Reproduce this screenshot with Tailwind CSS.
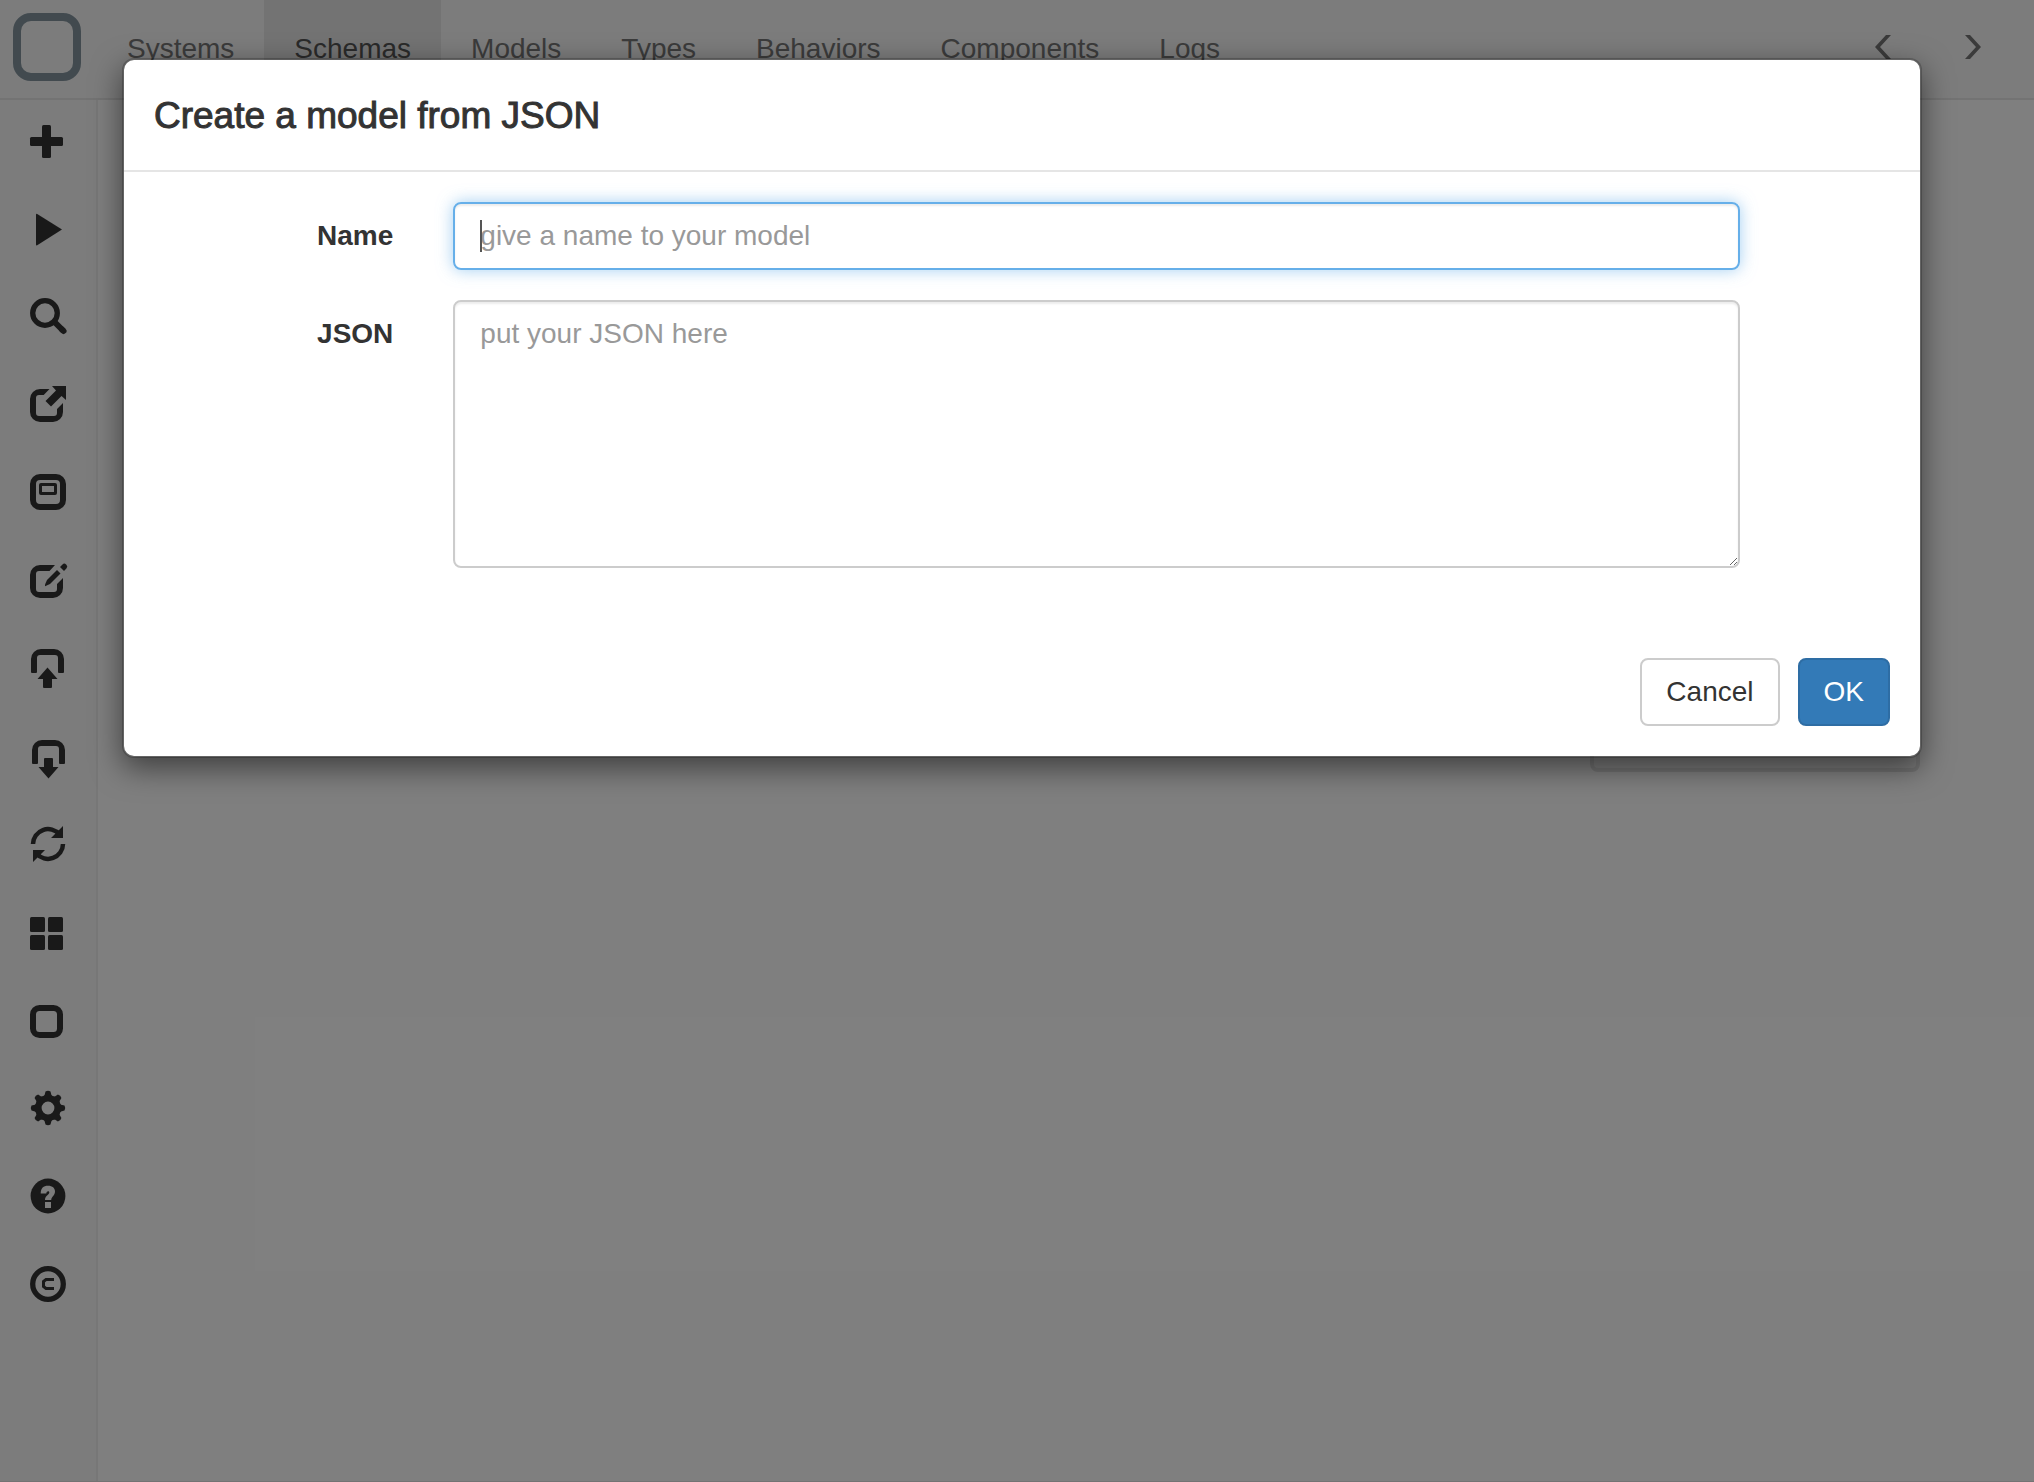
<!DOCTYPE html>
<html lang="en">
<head>
<meta charset="utf-8">
<title>Schemas</title>
<script src="https://cdn.jsdelivr.net/npm/@tailwindcss/browser@4"></script>
</head>
<body class="bg-white font-['Helvetica_Neue','Liberation_Sans',Arial,sans-serif] text-[28px] leading-10 text-[#333]">
<div class="relative flex min-h-screen flex-col border-b border-[#e7e7e7]">

  <header class="flex h-[100px] items-stretch justify-between border-b-2 border-[#e7e7e7] bg-[#f8f8f8]">
    <div class="flex">
      <a href="#" aria-label="Home" class="w-[97px] shrink-0">
        <svg class="h-24 w-24" viewBox="0 0 96 96" fill="none" stroke="#84959f" stroke-width="8"><rect x="17" y="17" width="60" height="60" rx="14"/></svg>
      </a>
      <nav class="flex text-[#777]">
        <a href="#" class="px-[30px] pt-[29px]">Systems</a>
        <a href="#" class="bg-[#e7e7e7] px-[30px] pt-[29px] text-[#555]">Schemas</a>
        <a href="#" class="px-[30px] pt-[29px]">Models</a>
        <a href="#" class="px-[30px] pt-[29px]">Types</a>
        <a href="#" class="px-[30px] pt-[29px]">Behaviors</a>
        <a href="#" class="px-[30px] pt-[29px]">Components</a>
        <a href="#" class="px-[30px] pt-[29px]">Logs</a>
      </nav>
    </div>
    <div class="flex pr-[26px]">
      <button type="button" aria-label="Back" class="w-[90px]"><svg class="h-24 w-[90px]" viewBox="0 0 90 96" fill="#777"><path d="M47 46 58 34H63L52 46 63 58H58z"/></svg></button>
      <button type="button" aria-label="Forward" class="w-[90px]"><svg class="h-24 w-[90px]" viewBox="0 0 90 96" fill="#777"><path d="M63 46 52 34H47L58 46 47 58H52z"/></svg></button>
    </div>
  </header>

  <div class="flex flex-1">
    <aside class="flex w-[98px] flex-col border-r-2 border-[#efefef] bg-[#f8f8f8]">
      <button type="button" aria-label="Add"><svg class="block h-22 w-24" viewBox="0 0 96 88" fill="#333"><rect x="42" y="25" width="9" height="33" rx="1.5"/><rect x="30" y="37" width="33" height="9" rx="1.5"/></svg></button>
      <button type="button" aria-label="Run"><svg class="block h-22 w-24" viewBox="0 0 96 88" fill="#333"><path d="M36 26.5q0-1.200 1.200-.6L62 41.500 37.200 57.200q-1.200.6-1.200-.6z"/></svg></button>
      <button type="button" aria-label="Search"><svg class="block h-22 w-24" viewBox="0 0 96 88" fill="none" stroke="#333"><circle cx="45" cy="37" r="12.3" stroke-width="5.300"/><path d="M54.500 46 63.500 55" stroke-width="6"/><path d="M62 53.500 63.500 55" stroke-width="6" stroke-linecap="round"/></svg></button>
      <button type="button" aria-label="Open"><svg class="block h-22 w-24" viewBox="0 0 96 88" fill="#333"><path d="M49.500 25H40a10 10 0 0 0-10 10v13a10 10 0 0 0 10 10h13a10 10 0 0 0 10-10V39l-6 6v4a3 3 0 0 1-3 3H39a3 3 0 0 1-3-3V34a3 3 0 0 1 3-3h4.700z"/><path d="M52 22H66V36L61.500 32 51 42.500 45.500 37 56 26.500z"/></svg></button>
      <button type="button" aria-label="Models"><svg class="block h-22 w-24" viewBox="0 0 96 88" fill="none" stroke="#333"><rect x="33" y="25" width="30" height="30" rx="7" stroke-width="6"/><rect x="40.500" y="32.500" width="15" height="9" rx=".5" stroke-width="3"/></svg></button>
      <button type="button" aria-label="Edit"><svg class="block h-22 w-24" viewBox="0 0 96 88" fill="#333"><path d="M55 25H40a10 10 0 0 0-10 10v13a10 10 0 0 0 10 10h13a10 10 0 0 0 10-10V38l-6 6v5a3 3 0 0 1-3 3H39a3 3 0 0 1-3-3V34a3 3 0 0 1 3-3h10.500z"/><path d="M57 30 60.500 33.500 50 44 45 46.200V44.500L47 40z"/><path d="M60 27 62.500 24.500q1.800-1.800 3.600 0l.3.300q1.800 1.800 0 3.600L64 31z"/></svg></button>
      <button type="button" aria-label="Upload"><svg class="block h-22 w-24" viewBox="0 0 96 88" fill="#333"><path d="M31 44V31a10 10 0 0 1 10-10h13a10 10 0 0 1 10 10v13q0 1-1 1h-4q-1 0-1-1V30a3 3 0 0 0-3-3H40a3 3 0 0 0-3 3v14q0 1-1 1h-4q-1 0-1-1z"/><path d="M47.500 39.500 57.500 51H52v8q0 1-1 1h-7q-1 0-1-1v-8h-5.500z"/></svg></button>
      <button type="button" aria-label="Download"><svg class="block h-22 w-24" viewBox="0 0 96 88" fill="#333"><path d="M32 47V34a10 10 0 0 1 10-10h13a10 10 0 0 1 10 10v13q0 1-1 1h-4q-1 0-1-1V33a3 3 0 0 0-3-3H41a3 3 0 0 0-3 3v14q0 1-1 1h-4q-1 0-1-1z"/><path d="M48.500 62.500 38.500 51H44v-8q0-1 1-1h7q1 0 1 1v8h5.500z"/></svg></button>
      <button type="button" aria-label="Refresh"><svg class="block h-22 w-24" viewBox="0 0 96 88" fill="#333"><path d="M33 40A15 15 0 0 1 59.500 30.500M63 40A15 15 0 0 1 36.500 49.500" fill="none" stroke="#333" stroke-width="4.500"/><path d="M63 22V34H51L54.500 30.500 58.500 26.500zM33 58V46H45L41.500 49.500 37.500 53.500z"/></svg></button>
      <button type="button" aria-label="Grid"><svg class="block h-22 w-24" viewBox="0 0 96 88" fill="#333"><rect x="30" y="25" width="15" height="15" rx="1.500"/><rect x="48" y="25" width="15" height="15" rx="1.500"/><rect x="30" y="43" width="15" height="15" rx="1.500"/><rect x="48" y="43" width="15" height="15" rx="1.500"/></svg></button>
      <button type="button" aria-label="Component"><svg class="block h-22 w-24" viewBox="0 0 96 88" fill="none" stroke="#333" stroke-width="6"><rect x="33" y="28" width="27" height="27" rx="6.500"/></svg></button>
      <button type="button" aria-label="Settings"><svg class="block h-22 w-24" viewBox="0 0 96 88" fill="#333" stroke="#333"><circle cx="48" cy="40" r="9.700" fill="none" stroke-width="6.600"/><g stroke="none"><path id="teeth" d="M43 29Q45 27.500 45.500 23.500Q48 22 50.500 23.500Q51 27.500 53 29zM43 51Q45 52.500 45.500 56.500Q48 58 50.500 56.500Q51 52.500 53 51z"/><use href="#teeth" transform="rotate(45 48 40)"/><use href="#teeth" transform="rotate(90 48 40)"/><use href="#teeth" transform="rotate(135 48 40)"/></g></svg></button>
      <button type="button" aria-label="Help"><svg class="block h-22 w-24" viewBox="0 0 96 88" fill="#333"><circle cx="48" cy="40" r="17.400"/><path d="M40.700 37.500C40.700 32 43.500 29.700 48 29.700C52.500 29.700 55 32 55 35.500C55 39.500 51.500 40.500 51.200 44H45C45 39.500 49.300 38.800 49.300 36.500C49.300 34.500 46.500 34.700 46.300 37.500zM45 46h6v6h-6z" fill="#f8f8f8"/></svg></button>
      <button type="button" aria-label="Copyright"><svg class="block h-22 w-24" viewBox="0 0 96 88" fill="none" stroke="#333"><circle cx="48" cy="40" r="15.300" stroke-width="5.300"/><path d="M54 35.500H46L43.500 37.500V42.500L46 44.500H54" stroke-width="3"/></svg></button>
    </aside>
    <main class="flex-1"></main>
  </div>

  <!-- Menu that stays open underneath the dialog -->
  <div class="absolute top-[300px] right-[114px] h-[472px] w-[330px] rounded-lg border-4 border-[#e2e2e2] bg-[#f4f4f4]"></div>
</div>

<div class="absolute inset-0 bg-black/50 pt-[58px] pr-28 pl-[122px]">
  <div role="dialog" aria-labelledby="dialog-title" class="rounded-xl border-2 border-black/20 bg-white bg-clip-padding shadow-[0_10px_30px_rgba(0,0,0,0.5)]">
    <div class="border-b-2 border-[#e5e5e5] px-[30px] pt-[30px] pb-7">
      <h4 id="dialog-title" class="text-[37px] leading-[52px] [-webkit-text-stroke:1px_#333]">Create a model from JSON</h4>
    </div>
    <form>
      <div class="flex flex-col gap-[30px] pt-[30px] pb-15">
        <div class="grid grid-cols-12">
          <label for="name" class="col-span-2 pt-[14px] pr-[30px] text-right font-bold">Name</label>
          <div class="relative col-span-9 px-[30px]">
            <input id="name" type="text" placeholder="give a name to your model" class="block h-17 w-full rounded-lg border-2 border-[#66afe9] px-[25px] caret-transparent shadow-[inset_0_2px_2px_rgba(0,0,0,0.075),0_0_16px_rgba(102,175,233,0.6)] outline-none placeholder:text-[#999]">
            <span class="absolute top-[18px] left-[57px] h-8 w-[2px] bg-[#555]"></span>
          </div>
        </div>
        <div class="grid grid-cols-12">
          <label for="json" class="col-span-2 pt-[14px] pr-[30px] text-right font-bold">JSON</label>
          <div class="col-span-9 px-[30px]">
            <textarea id="json" placeholder="put your JSON here" class="block h-[268px] w-full resize rounded-lg border-2 border-[#ccc] px-[25px] py-3 shadow-[inset_0_2px_2px_rgba(0,0,0,0.075)] outline-none placeholder:text-[#999]"></textarea>
          </div>
        </div>
      </div>
      <div class="flex justify-end gap-[18px] p-[30px]">
        <button type="button" class="h-17 rounded-lg border-2 border-[#ccc] bg-white px-6">Cancel</button>
        <button type="submit" class="h-17 rounded-lg border-2 border-[#2e6da4] bg-[#337ab7] px-6 text-white">OK</button>
      </div>
    </form>
  </div>
</div>
</body>
</html>
